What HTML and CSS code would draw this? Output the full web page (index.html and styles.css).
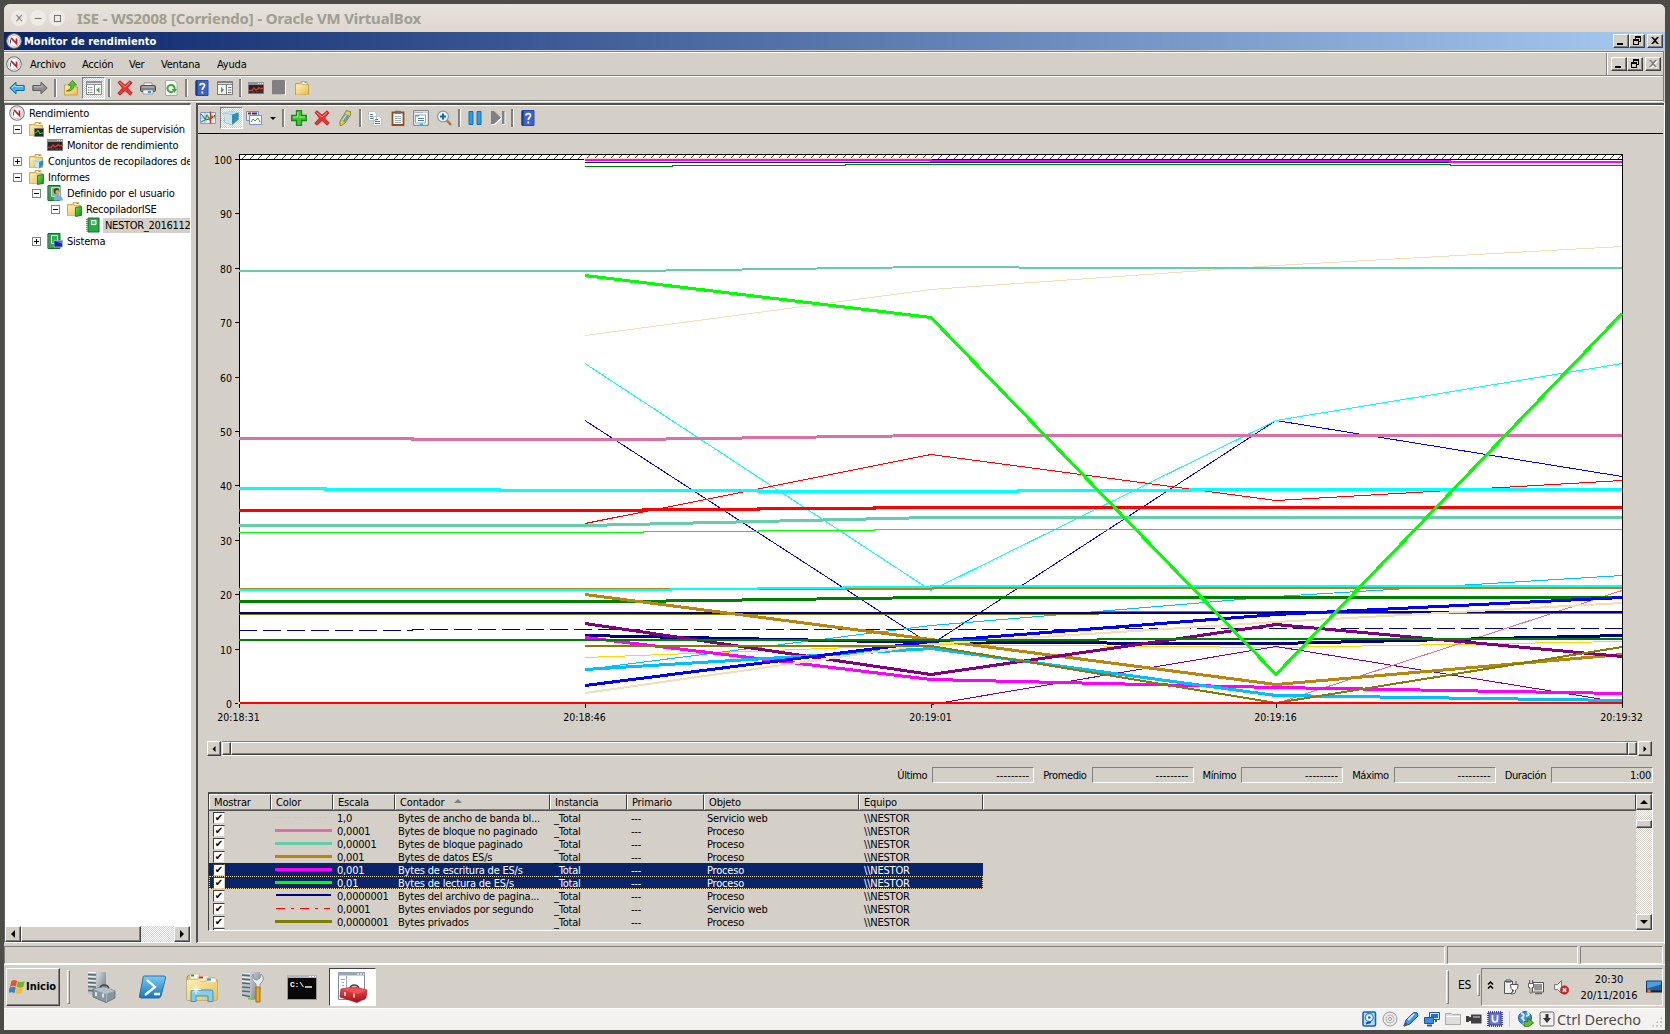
FILE: index.html
```html
<!DOCTYPE html>
<html lang="es">
<head>
<meta charset="utf-8">
<title>Monitor de rendimiento</title>
<link rel="stylesheet" href="styles.css">
</head>
<body>
<svg class="defs" width="0" height="0" aria-hidden="true">
  <defs>
    <linearGradient id="gFolder" x1="0" y1="0" x2="1" y2="1"><stop offset="0" stop-color="#fdf0b0"/><stop offset="1" stop-color="#e8bd55"/></linearGradient>
    <linearGradient id="gBlue" x1="0" y1="0" x2="0" y2="1"><stop offset="0" stop-color="#7ccbf2"/><stop offset="1" stop-color="#1477bd"/></linearGradient>
    <linearGradient id="gGray" x1="0" y1="0" x2="1" y2="1"><stop offset="0" stop-color="#d5dade"/><stop offset="1" stop-color="#69757d"/></linearGradient>
    <linearGradient id="gGreen" x1="0" y1="0" x2="1" y2="1"><stop offset="0" stop-color="#6be04a"/><stop offset="1" stop-color="#0c8c1c"/></linearGradient>
    <linearGradient id="gRed" x1="0" y1="0" x2="0" y2="1"><stop offset="0" stop-color="#f05050"/><stop offset="1" stop-color="#a80d12"/></linearGradient>
    <symbol id="i-perf" viewBox="0 0 16 16"><circle cx="8" cy="8" r="7.300" fill="#fff" stroke="#777" stroke-width="1.100"/><circle cx="8" cy="8" r="5.600" fill="#fff" stroke="#b4b4b4" stroke-width=".7"/><path d="M4.500 10.500V6.500" stroke="#555" fill="none"/><path d="M5 4.800l5.500 5.700V5.500" stroke="#d8141c" stroke-width="1.700" fill="none"/></symbol>
    <symbol id="i-back" viewBox="0 0 16 16"><path d="M.8 8L7 2.200V5.500h8.200v5H7v3.300z" fill="#42b3ee" stroke="#1264a0"/><path d="M3 8l3-3v1.500h8" stroke="#a4e0fb" fill="none"/></symbol>
    <symbol id="i-fwd" viewBox="0 0 16 16"><path d="M15.200 8L9 2.200V5.500H.8v5H9v3.300z" fill="#909090" stroke="#5c5c5c"/><path d="M2 6.800h8V5" stroke="#bcbcbc" fill="none"/></symbol>
    <symbol id="i-folder" viewBox="0 0 16 16"><path d="M1.500 3.500h5l1-2h5v3h2v10h-13z" fill="#efcf74" stroke="#c49838" stroke-width=".8"/><path d="M8 1.500h5v3H8z" fill="#fff7d8" stroke="#b4904a" stroke-width=".5"/><path d="M2 4.500h5.500l1.500 1h5v9H2z" fill="url(#gFolder)"/><path d="M10.500 2.500h2" stroke="#329fdd"/></symbol>
    <symbol id="i-up" viewBox="0 0 16 16"><path d="M1.500 5h5l1.500 2h6.500v8h-13z" fill="url(#gFolder)" stroke="#c49838" stroke-width=".8"/><path d="M3.500 11C7 10 8 8 8 5H5.500L9.500.5l4 4.500H11c0 4-3 6.500-7.500 6z" fill="#5cc82c" stroke="#26851a" stroke-width=".8"/></symbol>
    <symbol id="i-tree" viewBox="0 0 16 16"><path d="M.5 1.500h15v13H.5z" fill="#fff" stroke="#8a8a8a"/><path d="M0 1h16v4H0z" fill="#8e949c"/><path d="M1 3.500h14" stroke="#dfe3e8"/><path d="M2 7.500h5M2 10h5M2 12.500h5" stroke="#777" stroke-dasharray="1.500 .8"/><path d="M8.500 5v9" stroke="#888"/><path d="M13.500 7v6L10 10z" fill="#3cae29"/></symbol>
    <symbol id="i-panel" viewBox="0 0 16 16"><path d="M.5 1.500h15v13H.5z" fill="#f8f8f8" stroke="#777"/><path d="M0 1h16v4H0z" fill="#7b8289"/><path d="M1 3.500h14M9 5v9" stroke="#dadee4"/><path d="M4 7v6l3-3z" fill="#3cae29"/><path d="M9.500 5v9M11 7.500h3.500M11 10h3.500M11 12.500h3.500" stroke="#777"/></symbol>
    <symbol id="i-x" viewBox="0 0 16 16"><path d="M1 2.500L3 .8 8 5.200 13 .8l2 2L10.500 8l4.800 5-2.200 2.200L8 10.500l-5 4.700-2.200-2L5.500 8z" fill="#ef3030" stroke="#b31616" stroke-width=".8"/><path d="M2.500 2.500L8 7l5-4.500" stroke="#ff8c80" fill="none"/></symbol>
    <symbol id="i-print" viewBox="0 0 16 16"><path d="M4 3h8v3H4z" fill="#fff" stroke="#777" stroke-width=".7"/><rect x=".5" y="5.500" width="15" height="6" rx="1" fill="#818181" stroke="#4d4d4d"/><path d="M3 10h10v4H3z" fill="#e9f2fa" stroke="#8b8b8b" stroke-width=".7"/><path d="M2 7h12" stroke="#c9c9c9"/><path d="M8 12h3" stroke="#1e9ad7" stroke-width="2"/></symbol>
    <symbol id="i-refresh" viewBox="0 0 16 16"><path d="M2.500.5h9l2.500 3v12H2.500z" fill="#fff" stroke="#aaa"/><path d="M10 11.500A3.600 3.600 0 1 1 11.600 9" stroke="#36ad28" stroke-width="2" fill="none"/><path d="M8.500 9h5.500l-2.500 4z" fill="#36ad28"/></symbol>
    <symbol id="i-help" viewBox="0 0 16 16"><path d="M2 .5h12v15H2z" fill="#3e64c9" stroke="#274aa5"/><path d="M2.500 1v14" stroke="#18368c" stroke-width="2"/><path d="M6 5.500C6 3 10.500 2.800 10.500 5.500 10.500 7.500 8.300 7.500 8.300 10M8.300 11.500v2" stroke="#fff" stroke-width="1.700" fill="none"/></symbol>
    <symbol id="i-mon" viewBox="0 0 16 16"><path d="M.5 2.500h15v11H.5z" fill="#262626" stroke="#777"/><path d="M0 2h16v3H0z" fill="#929292"/><path d="M10 3.500h5" stroke="#eee" stroke-dasharray="1 1"/><path d="M1 10.500h3l2-2.500 2 2 2-1 1-1.500 2 1.500 3-1" stroke="#ee2c2c" stroke-width="1.400" fill="none"/><path d="M4 12h10" stroke="#555" stroke-dasharray="3 1"/></symbol>
    <symbol id="i-stop" viewBox="0 0 16 16"><path d="M2 1h13v14H2z" fill="#fff"/><rect x="1" y="0" width="13" height="14.500" rx="1" fill="#808080"/></symbol>
    <symbol id="i-chart" viewBox="0 0 16 16"><path d="M.5 2.500h15v11H.5z" fill="#e0ecf8" stroke="#7b9dc8"/><path d="M5 3v10M1 8h14" stroke="#9bb8dc"/><path d="M1 4l5 6 3-1M11 9l4-4" stroke="#274f96" fill="none"/><path d="M1 12l4-2 2-5 3 5 2-4 3 1" stroke="#35a12c" fill="none" stroke-width="1.200"/><path d="M10.500 1.500v12" stroke="#e52a20" stroke-width="1.400"/></symbol>
    <symbol id="i-cube" viewBox="0 0 16 16"><path d="M.5 3l6.500-2 8.500 1.500v7l-7 5.500-7-2.500z" fill="#58a8c8"/><path d="M.5 3l6.500-2 8.500 1.500-6 2z" fill="#b9e4ef"/><path d="M.8 3.200L9 4.800v10l-7.200-2.500z" fill="#cfe2e8"/><path d="M9 4.800l6.500-2.300v7l-6.500 5.500z" fill="#328eb5"/></symbol>
    <symbol id="i-report" viewBox="0 0 16 16"><path d="M.5 1.500h12v9H.5z" fill="#e4edf8" stroke="#7392bc"/><path d="M2 3.500h3" stroke="#c11" stroke-width="2"/><path d="M6 3.500h5" stroke="#25348c" stroke-width="2"/><path d="M3.500 5.500h12v9h-12z" fill="#fff" stroke="#7392bc"/><path d="M5 12l2-3 2 2 3-3 2 4" stroke="#3da734" fill="none"/></symbol>
    <symbol id="i-plus" viewBox="0 0 16 16"><path d="M5.500.7h5v4.800h4.800v5h-4.800v4.800h-5v-4.800H.7v-5h4.800z" fill="#42c637" stroke="#18851d" stroke-width="1.300"/><path d="M6.800 2v5H2M8 7h6" stroke="#a4f080" fill="none"/></symbol>
    <symbol id="i-pen" viewBox="0 0 16 16"><path d="M9 .8l4.500.7v3.500L8 13l-3.500 2.500H3v-4.500L7.500 4z" fill="#e0d42e" stroke="#76731f" stroke-width=".8"/><path d="M8 3.500l4.500 2-4.500 7-3.500-2z" fill="#71989f"/><path d="M9.500 4.500l-4 6" stroke="#c8dde0" stroke-width="1.300"/></symbol>
    <symbol id="i-copy" viewBox="0 0 16 16"><path d="M1.500 1.500h6l2 2v7h-8zM6.500 6.500h6l2 2v7h-8z" fill="#fff" stroke="#b4bdc8" stroke-width=".8"/><path d="M3 4.500h3M3 6.500h3M3 8.500h3M8 9.500h3M8 11.500h5M8 13.500h5" stroke="#3c74ae" stroke-width=".9"/></symbol>
    <symbol id="i-clip" viewBox="0 0 16 16"><path d="M2.500 2.500h11v12.500h-11z" fill="#fff" stroke="#8c4f23" stroke-width="1.800"/><path d="M5 .8h6v3H5z" fill="#716d67"/><path d="M5 6.500h6M5 8.500h6M5 10.500h6M5 12.500h6" stroke="#8898a4" stroke-width=".8"/></symbol>
    <symbol id="i-props" viewBox="0 0 16 16"><path d="M.7.700h14.600v14.600H.7z" fill="#f3f8fb" stroke="#777"/><path d="M1.500 2.500h13" stroke="#a4b4c9" stroke-dasharray="9 1 1 1"/><path d="M2.500 5h10v8h-10z" fill="#fff" stroke="#95a8bd"/><path d="M2.500 6h4M5 8.500h6M5 10.500h6" stroke="#557bad"/><path d="M6.500 14.200h3.500" stroke="#24c1eb" stroke-width="1.500"/></symbol>
    <symbol id="i-zoom" viewBox="0 0 16 16"><path d="M10.500 10l4.500 5" stroke="#b37142" stroke-width="2.500"/><circle cx="7" cy="6.500" r="5.400" fill="#e9f5fd" stroke="#8299ac" stroke-width="1.200"/><path d="M7 3.500v6M4 6.500h6" stroke="#1464b5" stroke-width="2"/></symbol>
    <symbol id="i-pause" viewBox="0 0 16 16"><path d="M2 1.500h4v13H2zM10 1.500H14v13H10z" fill="#2a9ce3" stroke="#1470ab"/></symbol>
    <symbol id="i-step" viewBox="0 0 16 16"><path d="M2 2v13h3l7-6.500V15h3.500V2h-3v5.500z" fill="#fff"/><path d="M1 1h3l7 6.500L4 14H1zM12 1h2.500v13H12z" fill="#808080"/></symbol>
    <symbol id="i-ftool" viewBox="0 0 16 16"><use href="#i-folder" width="16" height="16"/><path d="M6.500 7.500h9v8h-9z" fill="#1d2a22" stroke="#777" stroke-width=".8"/><path d="M7 12l2-1 1-2 2 4 1-1h2" stroke="#47d83c" fill="none"/></symbol>
    <symbol id="i-fcube" viewBox="0 0 16 16"><use href="#i-folder" width="16" height="16"/><use href="#i-cube" x="5" y="6" width="11" height="10"/></symbol>
    <symbol id="i-fgreen" viewBox="0 0 16 16"><use href="#i-folder" width="16" height="16"/><path d="M9.500 6.500l6-1v9l-6 1z" fill="url(#gGreen)" stroke="#0a7616" stroke-width=".8"/></symbol>
    <symbol id="i-book" viewBox="0 0 16 16"><path d="M3 1h11v14H3z" fill="#2ca84d" stroke="#116f2a"/><path d="M2 2v12.500" stroke="#777" stroke-width="2" stroke-dasharray="1 1"/><path d="M6.500 3.500h4.500v4H6.500z" fill="#4fce68" stroke="#fff"/></symbol>
    <symbol id="i-buser" viewBox="0 0 16 16"><path d="M1 .5h12v15H1z" fill="#2ca84d" stroke="#116f2a"/><path d="M1 1.500v13" stroke="#777" stroke-width="2" stroke-dasharray="1 1"/><path d="M4.500 2.500h8v9h-8z" fill="#8fb59a" stroke="#d8efdd" stroke-width=".8"/><circle cx="9.500" cy="6" r="2.900" fill="#4e3a30"/><circle cx="10.300" cy="7" r="1.900" fill="#dda97c"/><path d="M6.500 15.500c0-4 3-5 4.500-5s5 1 5 5z" fill="#79ace0"/></symbol>
    <symbol id="i-bsys" viewBox="0 0 16 16"><path d="M1 .5h12v15H1z" fill="#2ca84d" stroke="#116f2a"/><path d="M1 1.500v13" stroke="#777" stroke-width="2" stroke-dasharray="1 1"/><path d="M4.500 2.500h6v8h-6z" fill="#35b055" stroke="#e7f3e9"/><path d="M7 7.500h8.500V14H7z" fill="#1826a6" stroke="#a7b6c5" stroke-width=".8"/><path d="M8 8h7v3z" fill="#4f72e4"/></symbol>
    <symbol id="i-min" viewBox="0 0 12 10"><path d="M2 7h6v2H2z"/></symbol>
    <symbol id="i-rest" viewBox="0 0 12 10"><path d="M4 0h6v6H8V5h1V2H5v1H4zM2 3h6v6H2zm1 2v3h4V5z" fill-rule="evenodd"/></symbol>
    <symbol id="i-close" viewBox="0 0 12 10"><path d="M2 1h2l2 2 2-2h2L7 4.500 10 8H8L6 6 4 8H2l3-3.500z"/></symbol>
    <symbol id="i-server" viewBox="0 0 32 32"><path d="M4 1h10v27l-10-3z" fill="#b9c3c8"/><path d="M12 1h10v27l-9 1z" fill="url(#gGray)"/><path d="M4 4l8 .8M4 8l8 .8M4 12l8 .8M4 16l8 .8M4 20l8 .8M4 24l8 1.500" stroke="#5c686f" stroke-width="1.500"/><path d="M4 2l8 .5M4 6l8 .8M4 10l8 .8" stroke="#f4f7f8"/></symbol>
    <symbol id="i-tbserver" viewBox="0 0 32 32"><path d="M2 1h9v24l-9-2z" fill="#b9c3c8"/><path d="M11 1h9v24h-9z" fill="url(#gGray)"/><path d="M2 3.500l8 .5M2 7.500l8 .5M2 11.500l8 .5M2 15.500l8 .5M2 19.500l8 .5" stroke="#5c686f" stroke-width="1.500"/><path d="M2 1.500h8M2 5.500l8 .5M2 9.500l8 .5M2 13.500l8 .5" stroke="#f4f7f8"/><path d="M14 17c1-4 7-4 9 0" stroke="#3d474e" stroke-width="1.600" fill="none"/><path d="M7 18l11-2 11 4v7l-9 4.500L7 26z" fill="#8996a0" stroke="#566069" stroke-width=".7"/><path d="M7 18l11-2 11 4-9 3z" fill="#b5c0c7"/><path d="M10 21v4M17 22.500v4" stroke="#edf2f5" stroke-width="1.600"/><path d="M20.500 23v8" stroke="#a8b3bb"/></symbol>
    <symbol id="i-ps" viewBox="0 0 32 32"><path d="M8 5h20q2 0 1.500 2l-4.500 18q-.5 2-2.500 2H5q-2 0-1.500-2l3.500-18Q7 5 8 5z" fill="url(#gBlue)" stroke="#2a6fa6"/><path d="M11 9l8 7-10 8M18 23h6" stroke="#fff" stroke-width="2.300" fill="none"/></symbol>
    <symbol id="i-explorer" viewBox="0 0 32 32"><path d="M1 6l2-2h10l2 3h14l2 2v20H1z" fill="#e2c362" stroke="#b08b34"/><path d="M4 3h9v5H4zM12 5h11v5H12zM20 7h10v5H20z" fill="#fff" stroke="#d8c48c"/><path d="M5 4.500h3" stroke="#20a935" stroke-width="2"/><path d="M13 6.500h4" stroke="#e02b1e" stroke-width="2"/><path d="M21 8.500h4" stroke="#2798de" stroke-width="2"/><path d="M1 9h12l2 2h16v18H1z" fill="url(#gFolder)"/><path d="M5 30.500V21q0-2 2-2h18q2 0 2 2v9.500h-5V25H10v5.500z" fill="#86cdec" stroke="#3595c4"/><path d="M10 14v9M5 18.500h10M7 15.500l6 6M13 15.500l-6 6" stroke="#fff"/></symbol>
    <symbol id="i-svrtools" viewBox="0 0 32 32"><use href="#i-server" x="2" width="32" height="32"/><path d="M17 3l1 5 3 1 3-2 1-4q4 4 1 8l-2 2v6h-4v-6q-6-4-3-10z" fill="#e7ebed" stroke="#8b959c"/><path d="M20 16h4v15h-4z" fill="#eaa81d" stroke="#a66d09"/><path d="M12 27.500h3" stroke="#51df23" stroke-width="2"/></symbol>
    <symbol id="i-cmd" viewBox="0 0 32 32"><path d="M1.500 4.500h29v24h-29z" fill="#080808" stroke="#999"/><path d="M1 4h30v3H1z" fill="#aeb7c0"/><path d="M23 5.500h7" stroke="#fff" stroke-dasharray="2 1"/><text x="4" y="16" font-family="Liberation Mono" font-weight="700" font-size="8" fill="#fff">C:\</text><path d="M19 16h7" stroke="#fff" stroke-width="1.400"/></symbol>
    <symbol id="i-mmc" viewBox="0 0 32 32"><path d="M1.500 1.500h26v27h-26z" fill="#fff" stroke="#7f8b97"/><path d="M1 1h27v3.500H1z" fill="#98a4b0"/><path d="M20 3h7" stroke="#fff" stroke-dasharray="2 1"/><path d="M4 8.500h4M5 11.500h2M5 14.500h2M9.500 5v12" stroke="#9ba8b5"/><path d="M13 17c1-4 7-4 9 0" stroke="#444" stroke-width="1.600" fill="none"/><path d="M4 18l13-2 13 3-1 8-9 4.500L3 26z" fill="url(#gRed)" stroke="#981619" stroke-width=".7"/><path d="M4 18l13-2 13 3-9 4z" fill="#ee5252"/><path d="M8 21v4M17 22.500v4" stroke="#eee" stroke-width="1.500"/></symbol>
    <symbol id="i-flag" viewBox="0 0 16 16"><path d="M2.500 2Q5 0 8 2L7 7.500Q4 6 .8 8z" fill="#e8512c"/><path d="M8.700 2.200q3 1.500 7-.2l-1.500 6q-3 1.500-6.500 0z" fill="#76b52a"/><path d="M.6 8.600q3.400-1.600 6.200 0l-1.300 5.500q-3-1.800-6.300 0z" fill="#397fd4"/><path d="M7.500 8.800q3 1.500 6.500 0l-1.500 5.500q-3 1.500-6.300 0z" fill="#f7bd25"/></symbol>
    <symbol id="i-plug" viewBox="0 0 16 16"><path d="M1.500 2.500h8v12h-8zM3 1h5v2H3z" fill="#eee" stroke="#555"/><path d="M7.500 5.500H15q0 5-2.500 5.500v2q0 2-4 2v-1.500q2 0 2-2.500-3 0-3-5.500zM9.500 2v4M13 2v4" fill="#fff" stroke="#555"/></symbol>
    <symbol id="i-net" viewBox="0 0 16 16"><path d="M4.500 3.500h11v9.500h-11z" fill="#fff" stroke="#555"/><path d="M6 5h8v6.500H6z" fill="#929292"/><path d="M7 14.500h7" stroke="#666" stroke-width="1.500"/><path d="M1.500 1v3M4.500 1v3M.5 4.500h5v4H4V14H2V8.500H.5z" fill="#fff" stroke="#555" stroke-width=".9"/></symbol>
    <symbol id="i-snd" viewBox="0 0 16 16"><path d="M1.500 5.500h3l4-4v13l-4-4h-3z" fill="#eee" stroke="#777"/><circle cx="11.500" cy="11" r="4.200" fill="#d82424" stroke="#a81818" stroke-width=".6"/><path d="M9.800 9.300l3.400 3.400m0-3.400l-3.400 3.400" stroke="#fff" stroke-width="1.500"/></symbol>
    <symbol id="i-desk" viewBox="0 0 16 16"><path d="M.5 2h15v10H.5z" fill="#235dae" stroke="#15386c"/><path d="M1 2.500h14v3L1 9.500z" fill="#4c9de0"/><path d="M0 12.500h16" stroke="#222" stroke-width="2"/><circle cx="3" cy="12" r="1.800" fill="#ef751e"/></symbol>
    <symbol id="i-hd" viewBox="0 0 16 16"><rect x="2" y="1" width="12.500" height="14" rx="1.500" fill="#bfe0fb" stroke="#1162ba" stroke-width="1.600"/><circle cx="8.300" cy="6.500" r="4" fill="#f0f8ff" stroke="#268be5" stroke-width="1.300"/><circle cx="8.300" cy="6.500" r="1.300" fill="#1158a2"/><path d="M5 12.500l5-1.500" stroke="#1158a2" stroke-width="2"/></symbol>
    <symbol id="i-cd" viewBox="0 0 16 16"><circle cx="8" cy="8" r="7" fill="#e9e9e9" stroke="#999"/><circle cx="8" cy="8" r="4" fill="none" stroke="#bbb"/><circle cx="8" cy="8" r="1.500" fill="#fff" stroke="#999"/></symbol>
    <symbol id="i-usb" viewBox="0 0 16 16"><path d="M1 15l2-6 7-7q5-2 5 3l-8 8z" fill="#3a9af0" stroke="#174f90"/><path d="M5 9l6-6" stroke="#bfe1ff" stroke-width="2"/><path d="M1 15l3-3" stroke="#555" stroke-width="2"/></symbol>
    <symbol id="i-lan" viewBox="0 0 16 16"><path d="M5.500 1.500h10v7h-10z" fill="#dcecff" stroke="#24558c"/><path d="M7 3h7v4H7z" fill="#1972d0"/><path d="M.5 6.500h9v6h-9z" fill="#3191ec" stroke="#24558c"/><path d="M3 14.500h5M12 9v2" stroke="#555" stroke-width="2"/></symbol>
    <symbol id="i-shf" viewBox="0 0 16 16"><path d="M.5 4.500v-2h6l1 1h8v10H.5z" fill="#ddd" stroke="#aaa"/><path d="M1 5.500h14" stroke="#fff"/></symbol>
    <symbol id="i-cam" viewBox="0 0 16 16"><path d="M0 5h3v1h2V3.500h10.500v9H5V10H3v1H0z" fill="#3f3f3f"/><path d="M7 6h7" stroke="#aaa" stroke-width="1.500"/></symbol>
    <symbol id="i-chip" viewBox="0 0 16 16"><path d="M1 1h14v14H1z" fill="none" stroke="#4148a5" stroke-width="2" stroke-dasharray="1 1"/><path d="M2 2h12v12H2z" fill="#6576df" stroke="#3440a8"/><path d="M5.500 4v4q0 3 2.500 3t2.500-3V4" fill="none" stroke="#fff" stroke-width="1.700"/></symbol>
    <symbol id="i-globe" viewBox="0 0 16 16"><circle cx="7" cy="7" r="6.500" fill="#3f8dda" stroke="#255a90"/><path d="M3 2q5 2 1 5 4 3 1 6M9 1q4 3-1 4" stroke="#d8f2ff" stroke-width="2" fill="none"/><path d="M6 10.500h4V7l5.500 5-5.500 4-4-1z" fill="#65bd2e" stroke="#327716"/></symbol>
    <symbol id="i-key" viewBox="0 0 16 16"><rect x="1" y="1" width="14" height="14" rx="1.500" fill="#eee" stroke="#666"/><path d="M6.500 3h3v4H12l-4 5-4-5h2.500z" fill="#333"/></symbol>
    <pattern id="hatch" width="8" height="6" patternUnits="userSpaceOnUse"><path d="M1 5l5-5" stroke="#333" stroke-width="1" shape-rendering="crispEdges"/></pattern>
  </defs>
</svg>

<div class="vm">
  <header class="host-title">
    <span class="hb">×</span><span class="hb">−</span><span class="hb"><i></i></span>
    <span class="host-text">ISE - WS2008 [Corriendo] - Oracle VM VirtualBox</span>
  </header>

  <div class="app-title">
    <svg class="ic"><use href="#i-perf"/></svg><b>Monitor de rendimiento</b>
    <div class="winbtns"><span class="wb"><svg><use href="#i-min"/></svg></span><span class="wb"><svg><use href="#i-rest"/></svg></span><span class="wb last"><svg><use href="#i-close"/></svg></span></div>
  </div>

  <div class="bars">
    <nav class="menu">
      <svg class="ic"><use href="#i-perf"/></svg>
      <span class="m1">Archivo</span><span class="m2">Acción</span><span class="m3">Ver</span><span class="m4">Ventana</span><span>Ayuda</span>
      <div class="winbtns child"><span class="wb"><svg><use href="#i-min"/></svg></span><span class="wb"><svg><use href="#i-rest"/></svg></span><span class="wb last off"><svg><use href="#i-close"/></svg></span></div>
    </nav>
    <div class="toolbar main-tb">
      <span class="tb"><svg class="ic"><use href="#i-back"/></svg></span><span class="tb"><svg class="ic"><use href="#i-fwd"/></svg></span><span class="sep"></span>
      <span class="tb"><svg class="ic"><use href="#i-up"/></svg></span><span class="tb on"><svg class="ic"><use href="#i-tree"/></svg></span><span class="sep"></span>
      <span class="tb"><svg class="ic"><use href="#i-x"/></svg></span><span class="tb"><svg class="ic"><use href="#i-print"/></svg></span><span class="tb"><svg class="ic"><use href="#i-refresh"/></svg></span><span class="sep"></span>
      <span class="tb"><svg class="ic"><use href="#i-help"/></svg></span><span class="tb"><svg class="ic"><use href="#i-panel"/></svg></span><span class="sep"></span>
      <span class="tb"><svg class="ic"><use href="#i-mon"/></svg></span><span class="tb"><svg class="ic"><use href="#i-stop"/></svg></span><span class="tb"><svg class="ic"><use href="#i-folder"/></svg></span>
    </div>
  </div>

  <main class="panes">
    <aside class="tree">
      <ul>
        <li class="l0"><svg class="ic"><use href="#i-perf"/></svg><span>Rendimiento</span></li>
        <li class="l1"><i class="ex"></i><svg class="ic"><use href="#i-ftool"/></svg><span>Herramientas de supervisión</span></li>
        <li class="l2"><i class="ex none"></i><svg class="ic"><use href="#i-mon"/></svg><span>Monitor de rendimiento</span></li>
        <li class="l1"><i class="ex plus"></i><svg class="ic"><use href="#i-fcube"/></svg><span>Conjuntos de recopiladores de</span></li>
        <li class="l1"><i class="ex"></i><svg class="ic"><use href="#i-fgreen"/></svg><span>Informes</span></li>
        <li class="l2"><i class="ex"></i><svg class="ic"><use href="#i-buser"/></svg><span>Definido por el usuario</span></li>
        <li class="l3"><i class="ex"></i><svg class="ic"><use href="#i-fgreen"/></svg><span>RecopiladorISE</span></li>
        <li class="l4"><i class="ex none"></i><svg class="ic"><use href="#i-book"/></svg><span class="cur">NESTOR_2016112</span></li>
        <li class="l2"><i class="ex plus"></i><svg class="ic"><use href="#i-bsys"/></svg><span>Sistema</span></li>
      </ul>
      <div class="hscroll"><span class="sb"><i class="ar le"></i></span><span class="thumb"></span><span class="track"></span><span class="sb"><i class="ar ri"></i></span></div>
    </aside>

    <section class="work">
      <div class="toolbar graph-tb">
        <span class="tb"><svg class="ic"><use href="#i-chart"/></svg></span><span class="tb on"><svg class="ic"><use href="#i-cube"/></svg></span><span class="tb"><svg class="ic"><use href="#i-report"/></svg></span><span class="drop"><i class="ar do"></i></span><span class="sep"></span>
        <span class="tb"><svg class="ic"><use href="#i-plus"/></svg></span><span class="tb"><svg class="ic"><use href="#i-x"/></svg></span><span class="tb"><svg class="ic"><use href="#i-pen"/></svg></span><span class="sep"></span>
        <span class="tb"><svg class="ic"><use href="#i-copy"/></svg></span><span class="tb"><svg class="ic"><use href="#i-clip"/></svg></span><span class="tb"><svg class="ic"><use href="#i-props"/></svg></span><span class="tb"><svg class="ic"><use href="#i-zoom"/></svg></span><span class="sep"></span>
        <span class="tb"><svg class="ic"><use href="#i-pause"/></svg></span><span class="tb"><svg class="ic"><use href="#i-step"/></svg></span><span class="sep"></span>
        <span class="tb"><svg class="ic"><use href="#i-help"/></svg></span>
      </div>

      <svg class="plot" width="1465" height="607" viewBox="198 134 1465 607">
        <rect x="239.500" y="154.500" width="1383" height="549" fill="#fff" stroke="#000" shape-rendering="crispEdges"/>
        <g transform="translate(240 155)"><rect width="1382" height="4" fill="url(#hatch)"/></g>
        <g stroke="#000" fill="none" shape-rendering="crispEdges">
          <path d="M235 159.500H1622M235 213.500h4M235 268.500h4M235 322.500h4M235 377.500h4M235 431.500h4M235 485.500h4M235 540.500h4M235 594.500h4M235 649.500h4M235 703.500h4M239.500 703v5M585.500 703v5M931.500 703v5M1276.500 703v5M1622.500 703v5"/>
        </g>
        <g class="ylab">
          <text x="232" y="164">100</text><text x="232" y="218">90</text><text x="232" y="273">80</text><text x="232" y="327">70</text><text x="232" y="382">60</text><text x="232" y="436">50</text><text x="232" y="490">40</text><text x="232" y="545">30</text><text x="232" y="599">20</text><text x="232" y="654">10</text><text x="232" y="708">0</text>
        </g>
        <g class="xlab">
          <text x="238.500" y="721">20:18:31</text><text x="584.500" y="721">20:18:46</text><text x="930.500" y="721">20:19:01</text><text x="1275.500" y="721">20:19:16</text><text x="1621.500" y="721">20:19:32</text>
        </g>
        <g fill="none" shape-rendering="crispEdges">
          <g stroke-width="1">
            <path stroke="#f5deb3" d="M585 335.500L931 289.500 1276 265.500 1622 246.500"/>
            <path stroke="#00f" d="M585 420.500L931 644.500 1276 420.500 1622 476.500"/>
            <path stroke="#0ff" d="M585 363.500L931 590.500 1276 420.500 1622 363.500"/>
            <path stroke="red" d="M585 523.500L931 454.500 1276 500.500 1622 480.500"/>
            <path stroke="#0f0" d="M239 532.500H643V531.500H758V530.500H874V529.500H1622"/>
            <path stroke="#00bfff" d="M585 669.500L931 625.500 1276 596.500 1622 575.500"/>
            <path stroke="gold" d="M585 657.500L931 644.500 1276 647.500 1622 641.500"/>
            <path stroke="purple" d="M931 704.500L1276 646.500 1622 702.500"/>
            <path stroke="#db70a3" d="M1276 703.500L1622 590.500"/>
            <path stroke="#000080" stroke-dasharray="18 6" d="M239 630.500H412V629.500H1100V628.500H1622"/>
            <path stroke="green" d="M585 166.500H672V165.500H845V164.500H1450V165.500H1622"/>
            <path stroke="#000080" d="M585 162.500H1450"/>
          </g>
          <path stroke="#b8860b" stroke-width="2" d="M239 589H931V588H1622"/>
          <path stroke="#0ff" stroke-width="2" d="M239 590H671V589H758V588H844V587H931V586H1622"/>
          <path stroke="olive" stroke-width="2" d="M239 614H1098V612H1280V613H1622"/>
          <path stroke="#000080" stroke-width="2" d="M239 613H1276V612H1622"/>
          <g stroke-width="3">
            <path stroke="#db70a3" d="M239 438.500H412L412 439.500H628L931 435.500H1622"/>
            <path stroke="#0ff" d="M239 488.500H325V489.500H499V490.500H758V491.500H1018V490.500H1190V489.500H1622"/>
            <path stroke="red" d="M239 510.500H643V509.500H758V508.500H874V507.500H1622"/>
            <path stroke="#66cdaa" d="M239 525.500H585L931 517.500H1622"/>
            <path stroke="green" d="M239 601.500H628L931 597.500H1622"/>
            <path stroke="#000080" d="M585 635.500L931 642.500 1276 643.500 1622 635.500"/>
            <path stroke="#b8860b" d="M585 594.500L931 639.500 1276 684.500 1622 654.500"/>
            <path stroke="#f0f" d="M585 637.500L931 679.500 1276 687.500 1622 693.500"/>
            <path stroke="purple" d="M585 623.500L931 674.500 1276 624.500 1622 656.500"/>
            <path stroke="#00bfff" d="M585 669.500L931 648.500 1276 695.500 1622 700.500"/>
            <path stroke="#00f" d="M585 685.500L931 641.500 1276 614.500 1622 597.500"/>
          </g>
          <g stroke-width="2">
            <path stroke="#f5deb3" d="M585 693L931 644 1276 622 1622 603"/>
            <path stroke="olive" d="M585 646H931L1276 703 1622 647"/>
            <path stroke="green" d="M239 640H1098V639H1622"/>
            <path stroke="#66cdaa" d="M239 271H628L931 267 1190 268.500 1622 268"/>
          </g>
          <path stroke="#f5deb3" stroke-width="2" d="M584 159H931"/>
          <path stroke="#f0f" stroke-width="2" d="M585 160H931V161H1450V162H1622"/>
          <path stroke="#0f0" stroke-width="3" d="M585 275.500L931 317.500 1276 674.500 1622 313.500"/>
          <path stroke="red" stroke-width="2" d="M239 703H1622"/>
          <path stroke="#ff0" stroke-width="2" d="M238 703h2"/>
        </g>
      </svg>

      <div class="timebar"><span class="sb"><i class="ar le"></i></span><span class="range"><i class="grip"></i><i class="span"></i><i class="grip"></i></span><span class="sb"><i class="ar ri"></i></span></div>

      <div class="stats">
        <label>Último</label><output>---------</output>
        <label>Promedio</label><output>---------</output>
        <label>Mínimo</label><output>---------</output>
        <label>Máximo</label><output>---------</output>
        <label>Duración</label><output>1:00</output>
      </div>

      <div class="legend">
        <div class="list">
          <div class="row head"><span>Mostrar</span><span>Color</span><span>Escala</span><span>Contador<i class="sort"></i></span><span>Instancia</span><span>Primario</span><span>Objeto</span><span>Equipo</span><span></span></div>
          <div class="row"><i class="ck">✔</i><svg class="ln"><path d="M2 6.500h54" stroke="gold" stroke-dasharray="9 3 3 3"/></svg><span>1,0</span><span>Bytes de ancho de banda bl...</span><span>_Total</span><span>---</span><span>Servicio web</span><span>\\NESTOR</span></div>
          <div class="row"><i class="ck">✔</i><svg class="ln"><path d="M1 6.500h57" stroke="#db70a3" stroke-width="3"/></svg><span>0,0001</span><span>Bytes de bloque no paginado</span><span>_Total</span><span>---</span><span>Proceso</span><span>\\NESTOR</span></div>
          <div class="row"><i class="ck">✔</i><svg class="ln"><path d="M1 6.500h57" stroke="#66cdaa" stroke-width="3"/></svg><span>0,00001</span><span>Bytes de bloque paginado</span><span>_Total</span><span>---</span><span>Proceso</span><span>\\NESTOR</span></div>
          <div class="row"><i class="ck">✔</i><svg class="ln"><path d="M1 6.500h57" stroke="#b8860b" stroke-width="3"/></svg><span>0,001</span><span>Bytes de datos ES/s</span><span>_Total</span><span>---</span><span>Proceso</span><span>\\NESTOR</span></div>
          <div class="row sel"><i class="ck">✔</i><svg class="ln"><path d="M1 6.500h57" stroke="#f0f" stroke-width="3"/></svg><span>0,001</span><span>Bytes de escritura de ES/s</span><span>_Total</span><span>---</span><span>Proceso</span><span>\\NESTOR</span></div>
          <div class="row sel focus"><i class="ck">✔</i><svg class="ln"><path d="M1 6.500h57" stroke="#0f0" stroke-width="3"/></svg><span>0,01</span><span>Bytes de lectura de ES/s</span><span>_Total</span><span>---</span><span>Proceso</span><span>\\NESTOR</span></div>
          <div class="row"><i class="ck">✔</i><svg class="ln"><path d="M2 6h55" stroke="#000080" stroke-width="2"/></svg><span>0,0000001</span><span>Bytes del archivo de pagina...</span><span>_Total</span><span>---</span><span>Proceso</span><span>\\NESTOR</span></div>
          <div class="row"><i class="ck">✔</i><svg class="ln"><path d="M2 6.500h54" stroke="red" stroke-dasharray="9 6 3 6"/></svg><span>0,0001</span><span>Bytes enviados por segundo</span><span>_Total</span><span>---</span><span>Servicio web</span><span>\\NESTOR</span></div>
          <div class="row"><i class="ck">✔</i><svg class="ln"><path d="M1 6.500h57" stroke="olive" stroke-width="3"/></svg><span>0,0000001</span><span>Bytes privados</span><span>_Total</span><span>---</span><span>Proceso</span><span>\\NESTOR</span></div>
          <div class="row cut"><i class="ck"></i></div>
        </div>
        <div class="vscroll"><span class="sb"><i class="ar up"></i></span><span class="track t1"></span><span class="thumb"></span><span class="track"></span><span class="sb"><i class="ar dn"></i></span></div>
      </div>
    </section>
  </main>

  <footer class="status"><span></span><span class="s2"></span><span class="s3"></span></footer>

  <div class="taskbar">
    <span class="start"><svg class="ic"><use href="#i-flag"/></svg><b>Inicio</b></span>
    <span class="tsep"></span>
    <span class="task"><svg><use href="#i-tbserver"/></svg></span>
    <span class="task"><svg><use href="#i-ps"/></svg></span>
    <span class="task"><svg><use href="#i-explorer"/></svg></span>
    <span class="task"><svg><use href="#i-svrtools"/></svg></span>
    <span class="task"><svg><use href="#i-cmd"/></svg></span>
    <span class="task open"><svg><use href="#i-mmc"/></svg></span>
    <span class="fill"></span>
    <span class="tsep"></span><span class="lang">ES</span><span class="tsep short"></span>
    <div class="tray">
      <svg class="chev" viewBox="0 0 8 10"><path d="M1 4.500l2.500-2.500 2.500 2.500M1 8.500l2.500-2.500 2.500 2.500" fill="none" stroke="#000" stroke-width="1.500"/></svg>
      <svg class="ic a"><use href="#i-plug"/></svg><svg class="ic b"><use href="#i-net"/></svg><svg class="ic b"><use href="#i-snd"/></svg>
      <div class="clock"><span>20:30</span><span>20/11/2016</span></div>
      <svg class="ic"><use href="#i-desk"/></svg>
    </div>
  </div>

  <div class="vm-status">
    <svg class="ic"><use href="#i-hd"/></svg><svg class="ic"><use href="#i-cd"/></svg><svg class="ic"><use href="#i-usb"/></svg><svg class="ic"><use href="#i-lan"/></svg><svg class="ic"><use href="#i-shf"/></svg><svg class="ic"><use href="#i-cam"/></svg><svg class="ic"><use href="#i-chip"/></svg>
    <span class="vsep"></span><svg class="ic"><use href="#i-globe"/></svg><svg class="ic"><use href="#i-key"/></svg><span class="hostkey">Ctrl Derecho</span><i class="sizer"></i>
  </div>
</div>
</body>
</html>
```
FILE: styles.css
```css
* { box-sizing: border-box; }
html, body { margin: 0; height: 100%; overflow: hidden; }
body {
  padding: 4px 5px 4px 4px;
  background: #4b4c47;
  color: #000;
  font: 11px/13px "DejaVu Sans Condensed", "DejaVu Sans", "Liberation Sans", sans-serif;
  font-stretch: condensed;
  letter-spacing: -0.2px;
}
.defs { position: absolute; }
.ic { width: 16px; height: 16px; flex: none; display: block; }
i { font-style: normal; }

.vm { width: 1661px; height: 1026px; display: flex; flex-direction: column; background: #d4d0c8; border-radius: 6px 6px 0 0; overflow: hidden; }

/* host window title */
.host-title { height: 28px; flex: none; display: flex; align-items: center; padding: 0 0 0 7px; gap: 3px; background: linear-gradient(#e7e3dc, #dfd6ce); color: #a19d96; }
.hb { width: 16px; height: 16px; border-radius: 50%; background: #eeebe6; color: #77736c; display: flex; align-items: center; justify-content: center; font-size: 12px; letter-spacing: 0; }
.hb i { width: 7px; height: 7px; border: 1px solid #77736c; }
.host-text { margin-left: 9px; font: bold 15px/20px "Noto Sans", "Open Sans", sans-serif; letter-spacing: -0.16px; white-space: nowrap; text-shadow: 1px 0 1px #f5dfc2, -1px 0 1px #c9dcea; }

/* application title */
.app-title { height: 18px; flex: none; display: flex; align-items: center; gap: 2px; padding: 0 2px; background: linear-gradient(90deg, #0a246a, #a6caf0); color: #fff; letter-spacing: 0; }
.winbtns { margin-left: auto; display: flex; }
.wb { width: 16px; height: 14px; background: #d4d0c8; border: 1px solid; border-color: #fff #404040 #404040 #fff; box-shadow: inset -1px -1px #808080; }
.wb svg { width: 12px; height: 10px; display: block; margin: 1px; fill: #000; }
.wb.last { margin-left: 2px; }
.wb.off svg { fill: #808080; filter: drop-shadow(1px 1px 0 #fff); }

/* menu and toolbar */
.bars { height: 51px; flex: none; margin-top: 1px; margin-right: 1px; border-top: 1px solid #808080; border-right: 1px solid #808080; border-bottom: 1px solid #fff; box-shadow: inset 0 -1px #808080, inset 0 1px #fff; padding-top: 1px; }
.menu { height: 23px; display: flex; align-items: center; padding-left: 2px; border-bottom: 1px solid #808080; }
.menu span { white-space: nowrap; }
.menu > .ic { margin-right: 8px; }
.menu .m1 { width: 52px; } .menu .m2 { width: 47px; } .menu .m3 { width: 32px; } .menu .m4 { width: 56px; }
.winbtns.child { height: 22px; padding: 4px 2px 4px 3px; border-left: 1px solid #fff; box-shadow: -1px 0 #808080; }
.toolbar { display: flex; align-items: center; }
.main-tb { height: 25px; border-top: 1px solid #fff; padding: 0 0 2px 1px; }
.tb { width: 23px; height: 22px; flex: none; display: flex; align-items: center; justify-content: center; }
.tb.on, .hscroll .track, .vscroll .track { background: repeating-conic-gradient(#fff 0 25%, #d4d0c8 0 50%) 0 0 / 2px 2px; }
.tb.on { border: 1px solid; border-color: #808080 #fff #fff #808080; }
.sep { width: 8px; height: 18px; display: flex; justify-content: center; }
.sep::before { content: ""; width: 2px; background: #808080; border-right: 1px solid #fff; }
.drop { width: 14px; display: flex; justify-content: center; }

/* panes */
.panes { flex: none; height: 841px; margin-top: 1px; display: flex; justify-content: space-between; border-right: 1px solid #fff; padding-bottom: 1px; }
.tree { width: 187px; height: 840px; display: flex; flex-direction: column; background: #fff; border-style: solid; border-width: 2px 1px 1px 1px; border-color: #606060 #fff #fff #606060; overflow: hidden; }
.tree ul { flex: 1; margin: 0; padding: 0 0 0 4px; list-style: none; overflow: hidden; }
.tree li { height: 16px; display: flex; align-items: center; white-space: nowrap; letter-spacing: -0.22px; }
.tree li span { margin-left: 2px; padding: 0 2px; line-height: 15px; }
.tree li .cur { background: #d4d0c8; padding-right: 0; letter-spacing: -0.3px; }
.l1 { padding-left: 4px; } .l2 { padding-left: 23px; } .l3 { padding-left: 42px; } .l4 { padding-left: 61px; }
.ex { width: 9px; height: 9px; border: 1px solid #808080; margin-right: 6px; flex: none; background: linear-gradient(#000, #000) center / 5px 1px no-repeat; }
.ex.plus { background: linear-gradient(#000, #000) center / 5px 1px no-repeat, linear-gradient(#000, #000) center / 1px 5px no-repeat; }
.ex.none { visibility: hidden; }
.hscroll { height: 16px; flex: none; display: flex; background: #d4d0c8; }
.sb { width: 16px; flex: none; display: flex; align-items: center; justify-content: center; }
.sb, .thumb, .grip, .span { background: #d4d0c8; border: 1px solid; border-color: #fff #404040 #404040 #fff; box-shadow: inset -1px -1px #808080; }
.hscroll .thumb { width: 120px; }
.track { flex: 1; }
.ar { width: 0; height: 0; border: 4px solid transparent; }
.le { border-width: 4px 4px 4px 0; border-right-color: #000; }
.ri { border-width: 4px 0 4px 4px; border-left-color: #000; }
.up { border-width: 0 4px 4px; border-bottom-color: #000; }
.dn { border-width: 4px 4px 0; border-top-color: #000; }
.do { border-width: 3px 3px 0; border-top-color: #000; }

.work { width: 1468px; height: 840px; border-left: 2px solid #505050; border-top: 2px solid #505050; border-bottom: 1px solid #fff; display: flex; flex-direction: column; }
.graph-tb { height: 29px; flex: none; border-top: 1px solid #fff; border-bottom: 1px solid #000; padding-bottom: 3px; margin-right: 1px; }
.graph-tb .tb { width: 22.900px; }
.graph-tb .tb:first-child { margin-left: -1px; }
.graph-tb .sep { width: 7.800px; }
.plot { display: block; flex: none; }
.ylab { text-anchor: end; }
.xlab { text-anchor: middle; }
.plot text { font-size: 10.500px; letter-spacing: 0; }

.timebar { height: 15px; flex: none; margin: 0 12px 0 9px; display: flex; }
.timebar .sb { width: 14px; }
.timebar .ar { transform: scale(.75); }
.range { flex: 1; margin: 0 1px; display: flex; border-top: 1px solid #808080; border-bottom: 1px solid #fff; background: #d4d0c8; }
.grip { width: 9px; }
.span { flex: 1; }

.stats { flex: none; height: 16px; margin: 11px 11px 0 0; display: flex; justify-content: flex-end; align-items: center; letter-spacing: -0.4px; }
.stats label { margin: 1px 5px 0 9px; }
.stats output { width: 102px; height: 16px; padding: 1px 4px 0 0; text-align: right; border: 1px solid; border-color: #808080 #fff #fff #808080; letter-spacing: 0.1px; }
.stats output:last-child { letter-spacing: -0.3px; padding-right: 1px; }

.legend { flex: none; height: 139px; width: 1445px; margin: 9px 0 0 10px; display: flex; border-style: solid; border-width: 2px 1px 1px; border-color: #505050 #fff #fff #404040; overflow: hidden; }
.list { flex: 1; overflow: hidden; }
.row { display: grid; grid-template-columns: 62px 62px 62px 155px 77px 77px 155px 124px; width: 774px; height: 13px; white-space: nowrap; align-items: center; line-height: 13px; }
.row > span { padding-left: 4px; overflow: hidden; position: relative; top: 1px; }
.row > span:nth-child(4), .row > span:nth-child(7) { padding-left: 3px; }
.row > span:nth-child(8) { padding-left: 5px; }
.row.head { width: 100%; height: 17px; grid-template-columns: 62px 62px 62px 155px 77px 77px 155px 124px 1fr; border-bottom: 1px solid #505050; }
.row.head > span { top: 0; height: 16px; padding: 1px 0 0 4px; line-height: 14px; border: 1px solid; border-color: #fff #404040 #808080 #fff; letter-spacing: -0.15px; }
.sort { display: inline-block; border: 4px solid transparent; border-width: 0 4px 4px; border-bottom-color: #808080; margin: 0 0 3px 10px; }
.ck { width: 12px; height: 12px; margin-left: 4px; background: #fff; border: 1px solid; border-color: #404040 #d4d0c8 #d4d0c8 #404040; font: bold 10px/10px "DejaVu Sans", sans-serif; text-align: center; letter-spacing: 0; color: #000; }
.ln { width: 60px; height: 13px; margin-left: 3px; fill: none; shape-rendering: crispEdges; }
.row.sel { background: #0a246a; color: #fff; }
.row.focus { outline: 1px dotted #f5db95; outline-offset: -1px; }
.row.cut { height: 2px; overflow: hidden; align-items: start; }
.vscroll { width: 16px; flex: none; display: flex; flex-direction: column; }
.vscroll .sb { height: 16px; }
.vscroll .thumb { height: 8px; }
.vscroll .t1 { flex: none; height: 10px; }

/* status bar */
.status { height: 18px; flex: none; display: flex; gap: 2px; margin: 2px 2px 0 0; }
.status span { flex: 1; border: 1px solid; border-color: #808080 #fff #fff #808080; }
.status .s2 { flex: none; width: 131px; }
.status .s3 { flex: none; width: 83px; }

/* guest taskbar */
.taskbar { height: 44px; flex: none; border-top: 1px solid #fff; display: flex; align-items: center; padding: 0 2px; }
.start { width: 54px; height: 38px; display: flex; align-items: center; gap: 1px; padding-left: 2px; border: 1px solid; border-color: #fff #404040 #404040 #fff; box-shadow: inset -1px -1px #808080; letter-spacing: 0; }
.tsep { width: 3px; height: 34px; flex: none; border: 1px solid; border-color: #fff #808080 #808080 #fff; margin: 0 9px 0 7px; }
.task { width: 46px; height: 38px; margin-right: 4px; display: flex; align-items: center; justify-content: center; }
.task svg { width: 32px; height: 32px; }
.task.open { width: 47px; background: #fff; border: 1px solid; border-color: #404040 #fff #fff #404040; margin: 0; }
.fill { flex: 1; }
.fill + .tsep { margin: 0 9px 0 0; }
.lang { width: 19px; font-size: 12px; line-height: 15px; margin-top: -3px; }
.tsep.short { height: 22px; margin: -3px 1px 0 0; }
.tray { width: 182px; height: 38px; display: flex; align-items: center; border: 1px solid; border-color: #808080 #fff #fff #808080; }
.chev { width: 8px; height: 10px; margin: -4px 10px 0 5px; }
.tray .a { margin-left: -2px; }
.tray .b { margin-left: 9px; }
.clock { flex: 1; display: flex; flex-direction: column; align-items: center; line-height: 16px; padding: 2px 0 0 3px; letter-spacing: 0; }

/* host status bar */
.vm-status { flex: 1; background: #f4f2f0; border-top: 1px solid #fff; display: flex; align-items: center; justify-content: flex-end; gap: 5px; padding-bottom: 1px; }
.vsep { width: 1px; height: 16px; background: #cfcbc6; margin: 0 3px 0 1px; }
.hostkey { font: 14.500px/18px "Noto Sans", "Open Sans", sans-serif; color: #4c4c4c; letter-spacing: -0.1px; width: 84px; white-space: nowrap; margin-left: -3px; }
.sizer { width: 12px; height: 12px; margin: 5px 2px 0 5px; background: radial-gradient(circle, #cbc7c2 1px, transparent 1px) 0 0 / 4px 4px; clip-path: polygon(100% 0, 100% 100%, 0 100%); }
```
